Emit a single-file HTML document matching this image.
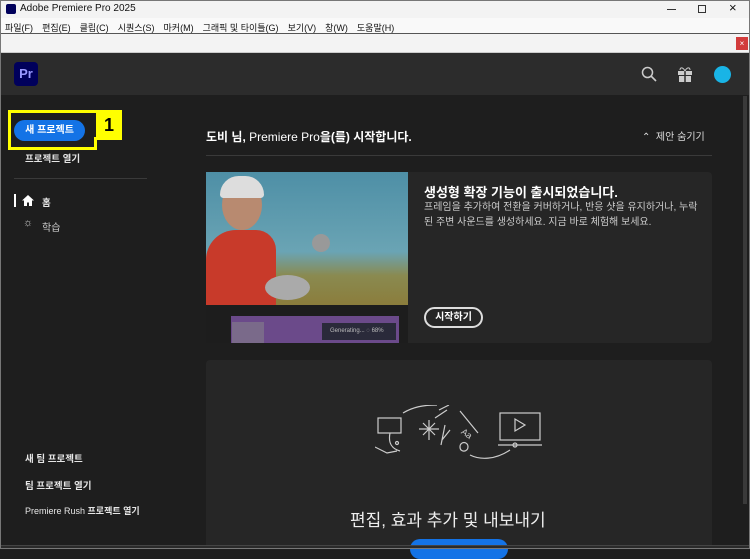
<!DOCTYPE html>
<html><head><meta charset="utf-8"><style>
*{margin:0;padding:0;box-sizing:border-box}
body{width:750px;height:549px;overflow:hidden;background:#1e1e1e;font-family:"Liberation Sans","Noto Sans CJK KR",sans-serif;position:relative}
.abs{position:absolute}
.title{left:0;top:0;width:750px;height:18px;background:#f3f3f3;font-size:10px;color:#111}
.menu{left:0;top:18px;width:750px;height:16px;background:#f9f9f9;font-size:9px;color:#111;border-bottom:1px solid #555}
.menu span{margin-right:9px}
.tool{left:0;top:34px;width:750px;height:19px;background:#f3f3f3;border-bottom:1px solid #ccc}
.hdr{left:0;top:53px;width:750px;height:42px;background:#2c2c2c}
.side{font-size:9.5px;color:#e6e6e6;font-weight:bold}
.card{background:#262626;border-radius:4px}
</style></head><body>
<div class="abs title"><div class="abs" style="left:6px;top:4px;width:10px;height:10px;background:#00005b;border-radius:2px"></div><div class="abs" style="left:20px;top:3px">Adobe Premiere Pro 2025</div>
<div class="abs" style="left:667px;top:9px;width:9px;height:1px;background:#333"></div>
<div class="abs" style="left:698px;top:5px;width:8px;height:8px;border:1px solid #333"></div>
<div class="abs" style="left:729px;top:0px;font-size:13px">×</div></div>
<div class="abs menu"><div style="padding:3px 0 0 5px;white-space:nowrap"><span>파일(F)</span><span>편집(E)</span><span>클립(C)</span><span>시퀀스(S)</span><span>마커(M)</span><span>그래픽 및 타이틀(G)</span><span>보기(V)</span><span>창(W)</span><span>도움말(H)</span></div></div>
<div class="abs tool"><div class="abs" style="left:736px;top:3px;width:12px;height:13px;background:#d23b3b;color:#fff;font-size:8px;text-align:center;line-height:13px">×</div></div>
<div class="abs hdr">
<div class="abs" style="left:14px;top:9px;width:24px;height:24px;background:#00005b;border-radius:4px;color:#9999ff;font-weight:bold;font-size:13px;text-align:center;line-height:24px">Pr</div>
<svg class="abs" style="left:641px;top:13px" width="16" height="16"><circle cx="6.5" cy="6.5" r="5" fill="none" stroke="#ccc" stroke-width="1.5"/><path d="M10 10l5 5" stroke="#ccc" stroke-width="1.6"/></svg>
<svg class="abs" style="left:677px;top:13px" width="16" height="16"><rect x="1" y="5" width="14" height="4" fill="#ccc"/><rect x="2" y="10" width="12" height="6" fill="#ccc"/><path d="M8 5v11" stroke="#2c2c2c" stroke-width="1.5"/><path d="M8 5c-2-4-5-4-5-1M8 5c2-4 5-4 5-1" stroke="#ccc" fill="none"/></svg>
<div class="abs" style="left:714px;top:13px;width:17px;height:17px;border-radius:50%;background:#19b4e6"></div>
</div>
<div class="abs" style="left:8px;top:110px;width:88px;height:40px;border:3px solid #ffff00;border-right:none"></div>
<div class="abs" style="left:96px;top:110px;width:26px;height:30px;background:#ffff00;font-weight:bold;font-size:18px;text-align:center;line-height:30px;color:#000">1</div>
<div class="abs" style="left:94px;top:137px;width:3px;height:13px;background:#ffff00"></div>
<div class="abs" style="left:14px;top:120px;width:71px;height:21px;background:#1473e6;border-radius:11px;color:#fff;font-size:10px;font-weight:bold;text-align:center;line-height:21px">새 프로젝트</div>
<div class="abs side" style="left:25px;top:151px">프로젝트 열기</div>
<div class="abs" style="left:14px;top:178px;width:133px;height:1px;background:#3a3a3a"></div>
<div class="abs" style="left:14px;top:194px;width:2px;height:13px;background:#fff"></div>
<svg class="abs" style="left:22px;top:195px" width="12" height="11"><path d="M6 0L0 5.5h2V11h3V7.5h2V11h3V5.5h2z" fill="#fff"/></svg>
<div class="abs side" style="left:42px;top:195px">홈</div>
<div class="abs" style="left:23px;top:217px;color:#ccc;font-size:11px">☼</div>
<div class="abs" style="left:42px;top:219px;color:#ccc;font-size:10px">학습</div>
<div class="abs side" style="left:25px;top:451px">새 팀 프로젝트</div>
<div class="abs side" style="left:25px;top:478px">팀 프로젝트 열기</div>
<div class="abs side" style="left:25px;top:504px;font-weight:normal;font-size:9px">Premiere Rush <b>프로젝트 열기</b></div>
<div class="abs" style="left:206px;top:128px;color:#fff;font-size:12px;font-weight:bold">도비 님, <span style="font-weight:normal">Premiere Pro</span>을(를) 시작합니다.</div>
<div class="abs" style="left:642px;top:128px;color:#ddd;font-size:10px">⌃ &nbsp;제안 숨기기</div>
<div class="abs" style="left:206px;top:155px;width:506px;height:1px;background:#3a3a3a"></div>
<div class="abs card" style="left:206px;top:172px;width:506px;height:171px"></div>
<div class="abs" style="left:206px;top:172px;width:202px;height:133px;background:linear-gradient(180deg,#4e8fa6 0%,#6aa4b4 60%,#8a8a50 78%,#8b7d3c 100%)"></div>
<div class="abs" style="left:206px;top:230px;width:70px;height:75px;background:#c83a2a;border-radius:30px 20px 0 0"></div>
<div class="abs" style="left:222px;top:180px;width:40px;height:50px;background:#b88a70;border-radius:50%"></div>
<div class="abs" style="left:220px;top:176px;width:44px;height:22px;background:#ddd;border-radius:22px 22px 4px 4px"></div>
<div class="abs" style="left:265px;top:275px;width:45px;height:25px;background:#aaa;border-radius:50%"></div>
<div class="abs" style="left:312px;top:234px;width:18px;height:18px;background:#999;border-radius:50%"></div>
<div class="abs" style="left:206px;top:305px;width:202px;height:38px;background:#1d1d1d"></div>
<div class="abs" style="left:231px;top:316px;width:168px;height:27px;background:#6b4a8a"></div>
<div class="abs" style="left:232px;top:322px;width:32px;height:21px;background:#7a6a8a"></div>
<div class="abs" style="left:322px;top:323px;width:74px;height:17px;background:#2a2a3a;color:#bbb;font-size:6px;line-height:17px;padding-left:8px">Generating... ◌ 68%</div>
<div class="abs" style="left:424px;top:182px;color:#fff;font-size:13px;font-weight:bold">생성형 확장 기능이 출시되었습니다.</div>
<div class="abs" style="left:424px;top:200px;width:290px;color:#ccc;font-size:10px;line-height:15px;white-space:nowrap">프레임을 추가하여 전환을 커버하거나, 반응 샷을 유지하거나, 누락<br>된 주변 사운드를 생성하세요. 지금 바로 체험해 보세요.</div>
<div class="abs" style="left:424px;top:307px;width:59px;height:21px;border:2px solid #ddd;border-radius:11px;color:#fff;font-size:10px;font-weight:bold;text-align:center;line-height:17px">시작하기</div>
<div class="abs card" style="left:206px;top:360px;width:506px;height:189px"></div>
<svg class="abs" style="left:375px;top:405px" width="170" height="60" fill="none" stroke="#ccc" stroke-width="1.2">
<rect x="3" y="13" width="23" height="15"/><path d="M28 8c10-6 20-8 34-8"/><path d="M15 28c-2 10 2 16 10 18M0 42l12 6l10-2"/>
<circle cx="22" cy="38" r="1.5"/><path d="M48 18l12 12M60 18l-12 12M54 15v20M44 24h20M70 20l-4 20M75 25l-8 10"/>
<path d="M64 5l10-5M60 13l12-8M85 6l18 22"/><text x="88" y="30" font-size="9" fill="#ccc" stroke="none" transform="rotate(35 90 25)">Aa</text>
<path d="M85 42c0-6 8-6 8 0c0 5-8 6-8 0M95 50c10 5 25 5 40-5"/>
<rect x="125" y="8" width="40" height="27"/><path d="M140 14v12l10-6z"/><path d="M123 40h44"/><circle cx="140" cy="40" r="2"/>
</svg>
<div class="abs" style="left:350px;top:506px;color:#eee;font-size:17px">편집, 효과 추가 및 내보내기</div>
<div class="abs" style="left:410px;top:539px;width:98px;height:20px;background:#1473e6;border-radius:10px"></div>
<div class="abs" style="left:743px;top:96px;width:4px;height:408px;background:#3a3a3a"></div>
<div class="abs" style="left:0;top:545px;width:750px;height:4px;background:#2a2a2a;border-top:1px solid #444"></div>
<div class="abs" style="left:0;top:0;width:750px;height:549px;border:1px solid #777;pointer-events:none"></div>
</body></html>
